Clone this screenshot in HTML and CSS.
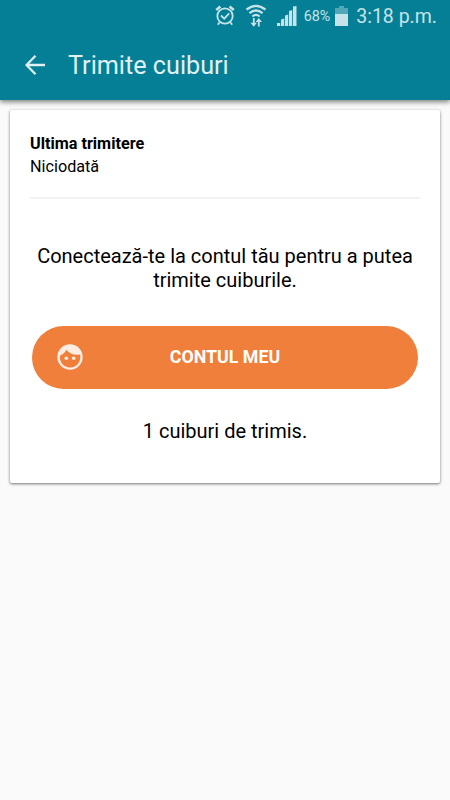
FILE: index.html
```
<!DOCTYPE html>
<html lang="ro">
<head>
    <meta charset="UTF-8">
    <meta name="viewport" content="width=device-width, initial-scale=1.0">
    <title>Trimite cuiburi</title>
    <link rel="stylesheet" href="styles.css">
</head>
<body>
    <header>
        <div class="status-bar">
            <svg class="alarm" width="20" height="22" viewBox="0 0 20 22" fill="none" stroke="currentColor" stroke-width="1.8">
                <circle cx="10" cy="11" r="7.7"/>
                <path d="M6 10.5l3.2 3.2 5-5.4M4.6 17.3l-1.8 2.4M15.4 17.3l1.8 2.4"/>
                <path d="M1.2 5.1l4.2-3.5M18.8 5.1l-4.2-3.5" stroke-width="2.6"/>
            </svg>
            <svg class="wifi" width="22" height="24" viewBox="0 0 22 24" fill="none" stroke="currentColor" stroke-width="2.2">
                <path d="M1.5 5.7q9.5-7.6 19 0M4.4 9.2q6.6-5.4 13.2 0M7.3 12.5q3.7-3.2 7.4 0"/>
                <path d="M8.8 14v7M13.8 22.5v-7" stroke-width="1.8"/>
                <path d="M5.5 18.8h6.4l-3.2 4zM10.6 17.9h6.4l-3.2-4z" fill="currentColor" stroke="none"/>
            </svg>
            <svg class="signal" width="20" height="20" viewBox="0 0 20 20" fill="currentColor">
                <path d="M0 17h3.2v3H0zM4 13.5l3.2-1V20H4zM8 9.5l3.2-1V20H8zM12 5l3.2-1V20H12zM16 .5L19.5 0v20H16z"/>
            </svg>
            <span class="percent">68%</span>
            <svg class="battery" width="13" height="20" viewBox="0 0 13 20" fill="currentColor">
                <path d="M4 0h5v2h4v6H0V2h4z" opacity=".4"/>
                <path d="M0 8h13v12H0z"/>
            </svg>
            <span class="time">3:18 p.m.</span>
        </div>
        <div class="toolbar">
            <svg width="20" height="20" viewBox="0 0 20 20" fill="none" stroke="currentColor" stroke-width="2.3">
                <path d="M20 10H2M10.5.8L1.5 10l9 9.2"/>
            </svg>
            <h1>Trimite cuiburi</h1>
        </div>
    </header>

    <main class="card">
        <section class="last-sent">
            <h2>Ultima trimitere</h2>
            <p>Niciodată</p>
        </section>
        <p class="message">Conectează-te la contul tău pentru a putea trimite cuiburile.</p>
        <button class="account" type="button">
            <svg width="26" height="26" viewBox="0 0 26 26">
                <path fill="currentColor" fill-rule="evenodd" d="M13 .3a12.7 12.7 0 1 1 0 25.4a12.7 12.7 0 1 1 0-25.4zM9.3 5.8C8.2 8.5 5.9 10.4 3 11.8A10.2 10.2 0 1 0 22.9 10.6C17.4 11.5 12.6 10 9.3 5.8z"/>
                <circle cx="9.3" cy="14.2" r="1.8" fill="currentColor"/>
                <circle cx="16.7" cy="14.2" r="1.8" fill="currentColor"/>
            </svg>
            <span>CONTUL MEU</span>
        </button>
        <p class="pending">1 cuiburi de trimis.</p>
    </main>
</body>
</html>
```

FILE: styles.css
```
* {
    box-sizing: border-box;
}

body {
    margin: 0;
    min-height: 100vh;
    font-family: Roboto, sans-serif;
    background-color: #fafafa;
    color: #000;
}

header {
    height: 100px;
    background-color: #057f96;
    color: #e0f0f3;
    box-shadow: 0 2px 5px rgba(0, 0, 0, 0.5);
}

.status-bar {
    display: flex;
    align-items: center;
    justify-content: flex-end;
    height: 32px;
    padding-right: 13px;
    color: #c5e3e8;
}

.alarm {
    margin-right: 10px;
}

.wifi {
    margin-right: 10px;
}

.signal {
    margin-right: 7px;
}

.percent {
    margin-right: 5px;
    font-size: 14.3px;
}

.battery {
    margin-right: 8px;
}

.time {
    font-size: 19.5px;
}

.toolbar {
    display: flex;
    align-items: center;
    height: 66px;
    padding-left: 25px;
}

h1 {
    margin: 0 0 0 23px;
    font-size: 25.2px;
    font-weight: 400;
}

.card {
    height: 373px;
    margin: 10px 10px 0;
    padding: 22px 20px 0;
    background: #fff;
    border-radius: 2px;
    box-shadow: 0 1px 3px rgba(0, 0, 0, 0.55);
}

.last-sent {
    height: 67px;
    border-bottom: 2px solid #f2f2f2;
}

.last-sent h2 {
    margin: 0;
    font-size: 16.2px;
    font-weight: 700;
    line-height: 23px;
}

.last-sent p {
    margin: 0;
    font-size: 16.2px;
    line-height: 24px;
}

.message {
    margin: 45px 0 0;
    font-size: 20px;
    line-height: 24px;
    text-align: center;
}

.account {
    display: grid;
    grid-template-columns: 26px 1fr 26px;
    align-items: center;
    width: 386px;
    height: 63px;
    margin: 34px auto 0;
    padding: 0 25px 1px;
    border: none;
    border-radius: 32px;
    background-color: #ef7f3b;
    color: #fff;
    font-family: inherit;
    font-size: 17.8px;
    font-weight: 700;
}

.account svg {
    color: #fdece2;
}

.account span {
    padding-bottom: 1px;
}

.pending {
    margin: 30px 0 0;
    font-size: 20px;
    line-height: 24px;
    text-align: center;
}
```
